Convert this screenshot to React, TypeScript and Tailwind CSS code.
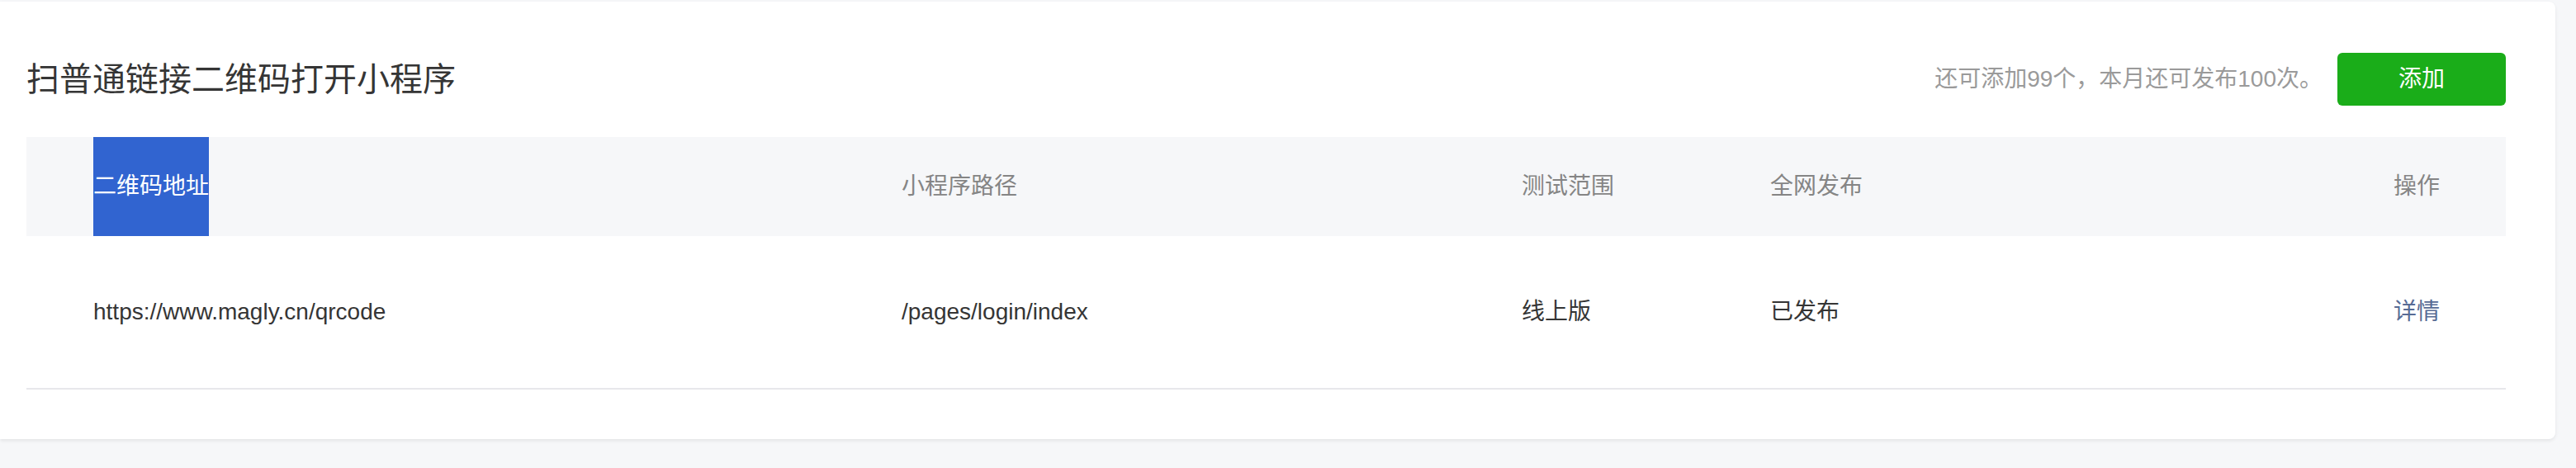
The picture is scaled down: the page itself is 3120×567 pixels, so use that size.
const font = "font-['Liberation_Sans','Noto_Sans_CJK_SC',sans-serif]";

const rows = [
  {
    url: "https://www.magly.cn/qrcode",
    path: "/pages/login/index",
    range: "线上版",
    status: "已发布",
  },
];

const cols = "grid grid-cols-[980px_751px_301px_1fr_auto]";

export default function App() {
  return (
    <div className={`${font} h-[567px] w-[3120px] bg-[#f6f7f9] pt-[2px] pr-[25px]`}>
      <div className="rounded-r-[8px] bg-white pl-[32px] pr-[60px] pt-[62px] pb-[60px] shadow-[0_2px_4px_rgba(0,0,0,0.08)]">
        <div className="flex h-[64px] items-center justify-between">
          <h1 className="text-[40px] font-normal leading-none text-[#353535]">
            扫普通链接二维码打开小程序
          </h1>
          <div className="flex items-center gap-[18px]">
            <span className="text-[28px] text-[#9a9a9a]">
              还可添加99个，本月还可发布100次。
            </span>
            <button className="h-[64px] w-[204px] rounded-[6px] bg-[#1aad19] text-[28px] text-white">
              添加
            </button>
          </div>
        </div>

        <div className="mt-[38px]">
          <div className={`${cols} h-[120px] bg-[#f6f7f9] text-[28px] text-[#858585]`}>
            <div className="pl-[81px]">
              <span className="flex h-full w-fit items-center bg-[#3164d0] text-white">
                二维码地址
              </span>
            </div>
            <div className="flex items-center pl-[80px]">小程序路径</div>
            <div className="flex items-center pl-[80px]">测试范围</div>
            <div className="flex items-center pl-[80px]">全网发布</div>
            <div className="flex items-center justify-end pr-[80px]">操作</div>
          </div>

          {rows.map((row) => (
            <div
              key={row.url}
              className={`${cols} h-[186px] border-b-2 border-[#e7e7eb] text-[28px] text-[#353535]`}
            >
              <div className="flex items-center pl-[81px]">{row.url}</div>
              <div className="flex items-center pl-[80px]">{row.path}</div>
              <div className="flex items-center pl-[80px]">{row.range}</div>
              <div className="flex items-center pl-[80px]">{row.status}</div>
              <div className="flex items-center justify-end pr-[80px]">
                <a className="text-[#576b95]">详情</a>
              </div>
            </div>
          ))}
        </div>
      </div>
    </div>
  );
}
